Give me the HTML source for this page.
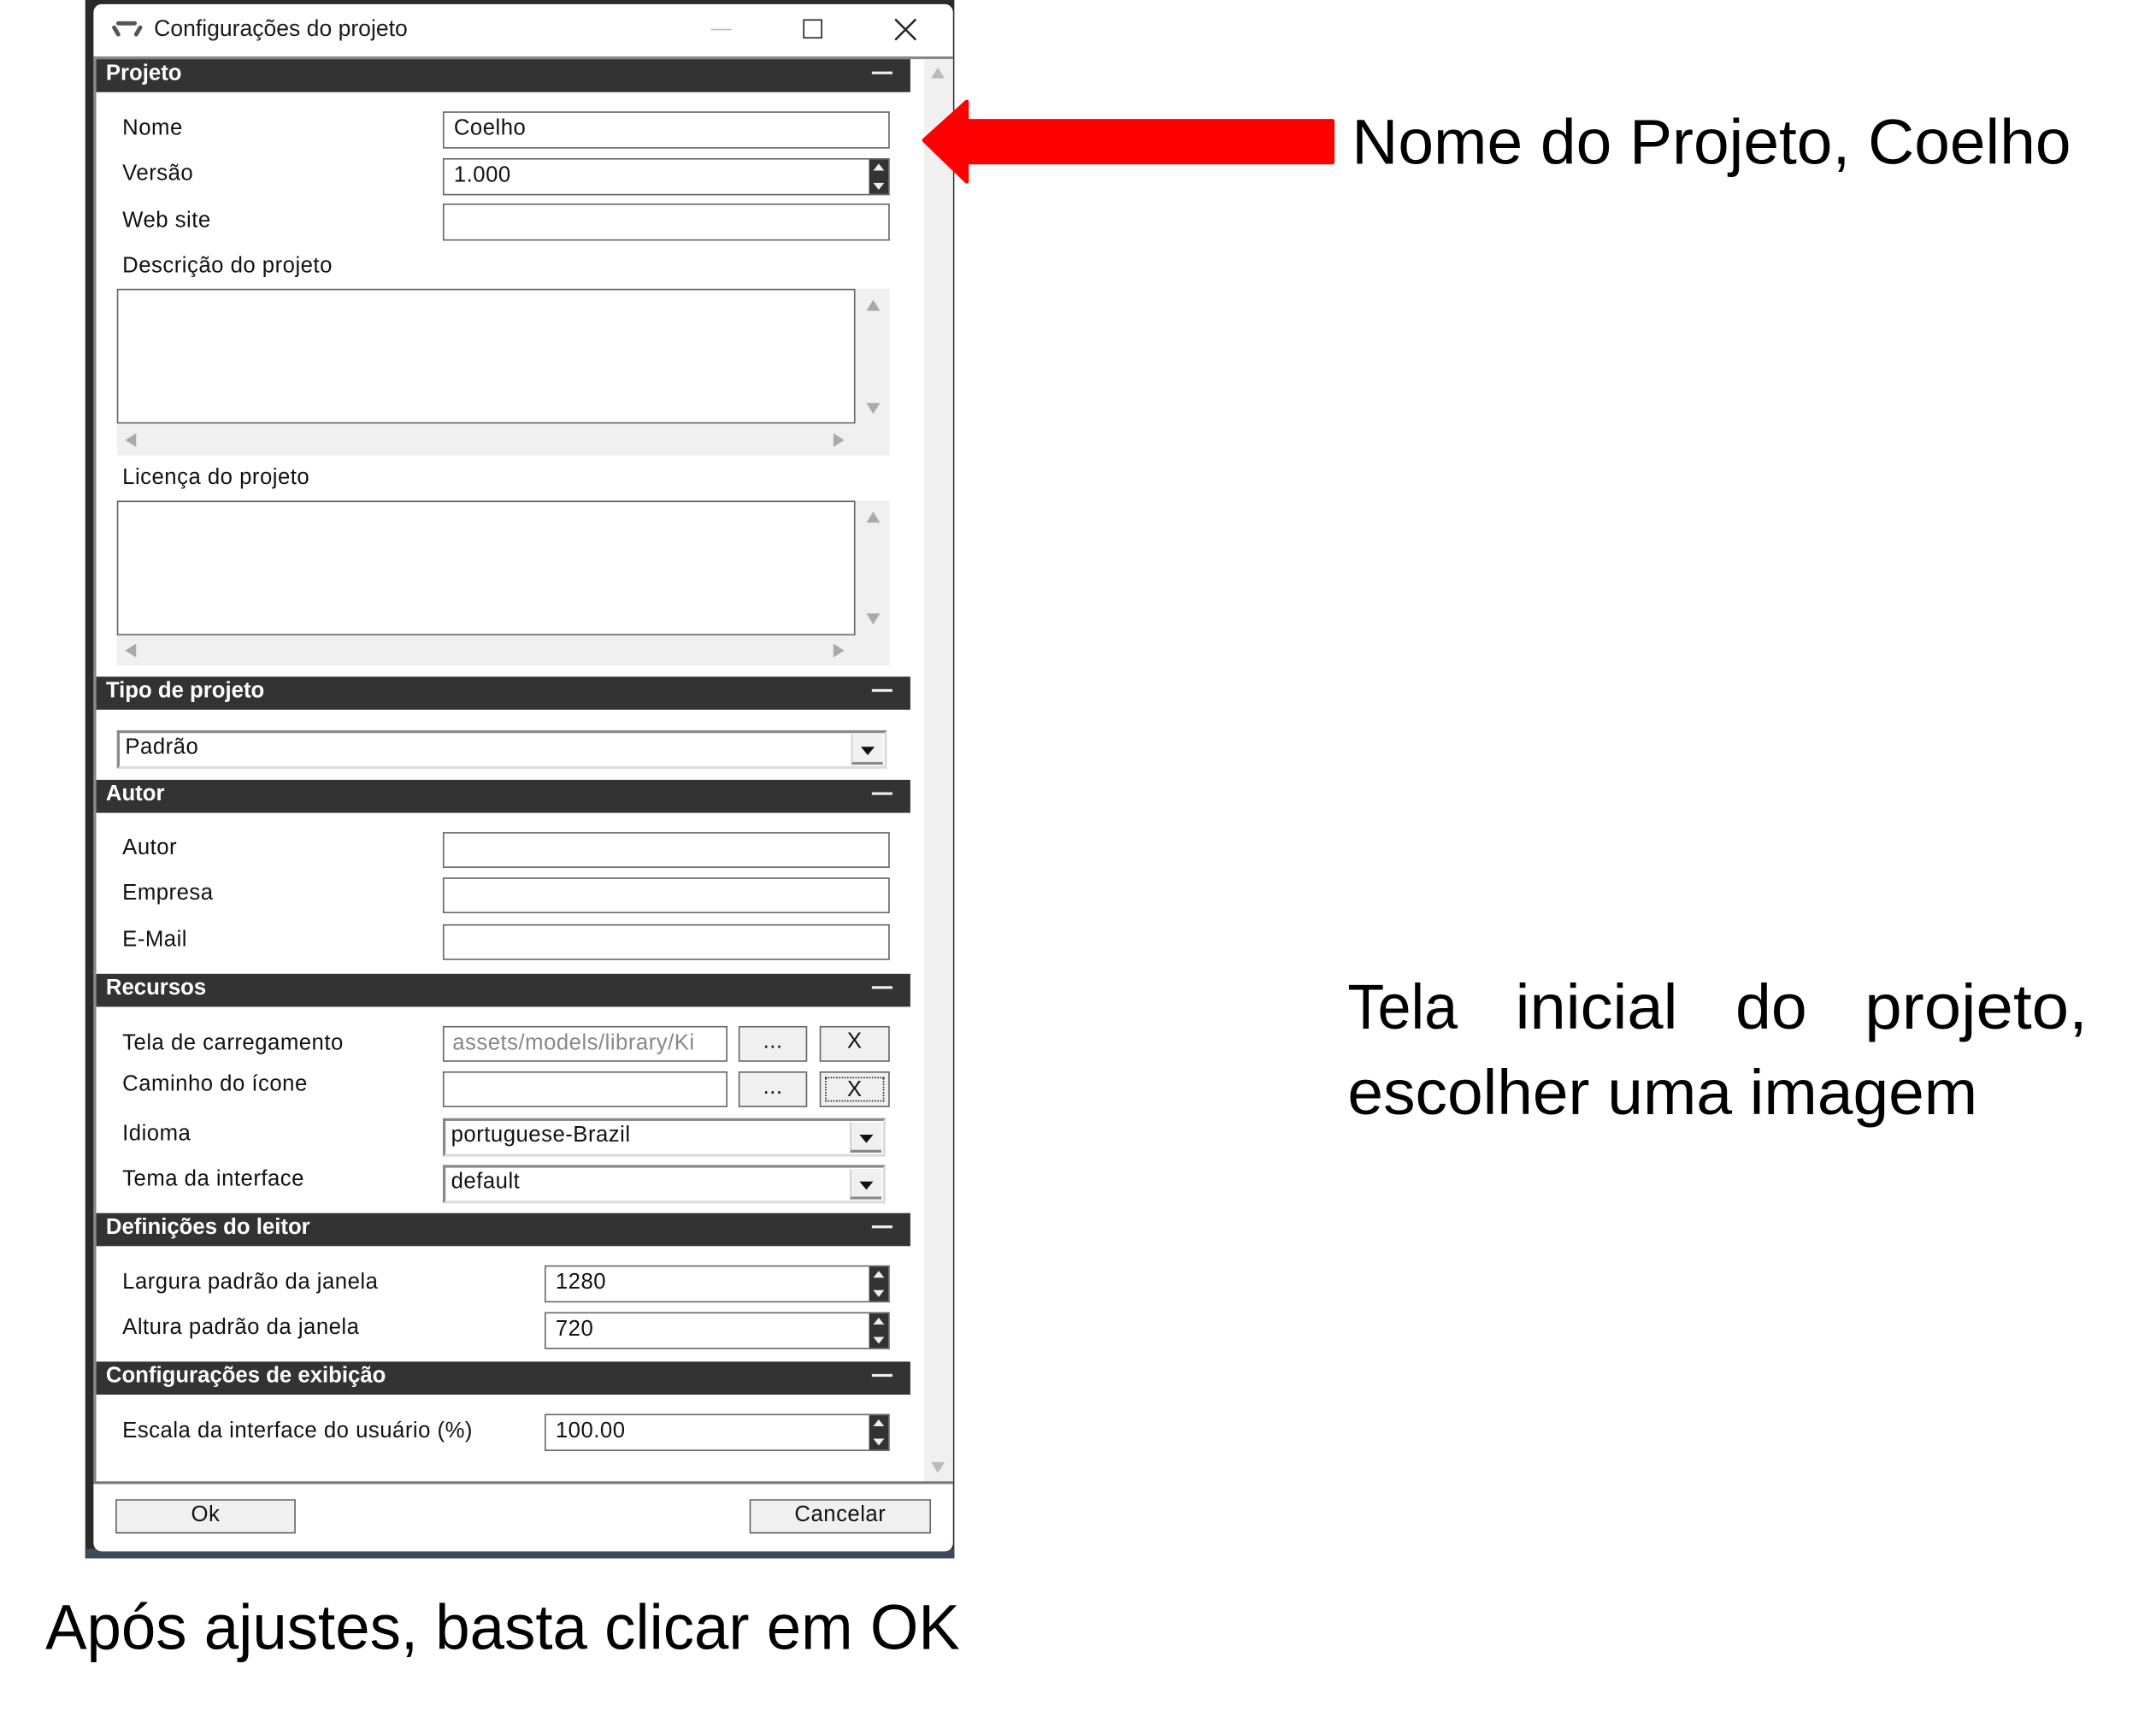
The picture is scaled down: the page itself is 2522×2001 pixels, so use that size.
<!DOCTYPE html>
<html><head><meta charset="utf-8"><style>
html,body{margin:0;padding:0;background:#fff;}
body{width:2522px;height:2001px;overflow:hidden;position:relative;}
#c{position:absolute;left:0;top:0;width:1560px;height:1238px;transform:scale(1.6086,1.6085);transform-origin:0 0;font-family:"Liberation Sans",Arial,sans-serif;}
.a{position:absolute;}
.lbl{position:absolute;left:89px;font-size:16px;color:#111;line-height:20px;letter-spacing:0.3px;}
.inp{position:absolute;background:#fff;border:1px solid #666;box-sizing:border-box;font-size:16px;line-height:24px;padding-left:7px;color:#111;letter-spacing:0.3px;}
.hdr{position:absolute;left:70px;width:592px;height:24px;background:#333;color:#fff;font-weight:bold;font-size:16px;line-height:22px;padding-left:7px;box-sizing:border-box;}
.hdr:after{content:"";position:absolute;right:13px;top:9px;width:15px;height:2px;background:#eee;}
.spin{position:absolute;right:0;top:0;width:14px;height:100%;background:#333;}
.spin:before{content:"";position:absolute;left:3px;top:3px;border:4px solid transparent;border-bottom:5px solid #eee;border-top:0;}
.spin:after{content:"";position:absolute;left:3px;bottom:3px;border:4px solid transparent;border-top:5px solid #eee;border-bottom:0;}
.sel{position:absolute;background:#fff;border:2px solid #888;border-right-color:#ddd;border-bottom-color:#ddd;box-sizing:border-box;font-size:16px;line-height:22px;padding-left:4px;color:#111;letter-spacing:0.3px;}
.sel i{position:absolute;right:1px;top:1px;width:22px;bottom:1px;background:#f0f0f0;border-left:1px solid #ccc;border-bottom:2px solid #888;}
.sel i:after{content:"";position:absolute;left:6px;top:9px;border:5px solid transparent;border-top:6px solid #111;border-bottom:0;}
.btn{position:absolute;background:#f0f0f0;border:1px solid #666;box-sizing:border-box;text-align:center;font-size:16px;line-height:22px;color:#111;letter-spacing:0.3px;}
.ta{position:absolute;background:#f0f0f0;}
.ta .w{position:absolute;left:0;top:0;background:#fff;border:1px solid #666;box-sizing:border-box;}
.tri{position:absolute;width:0;height:0;border:5px solid transparent;}
</style></head><body><div id="c">
<div class="a" style="left:62px;top:0;width:632px;height:1133px;background:#2a2a2a;"></div>
<div class="a" style="left:62px;top:1126px;width:632px;height:7px;background:#3a4a5a;"></div>
<div class="a" style="left:68px;top:3px;width:625px;height:1125px;background:#fff;border-radius:6px;"></div>
<svg class="a" style="left:80px;top:13px" width="26" height="16" viewBox="0 0 26 16"><path d="M6 4 L18 4 M3 7 L6 12 M22 7 L19 12" stroke="#555" stroke-width="3" fill="none" stroke-linecap="round"/></svg>
<div class="a" style="left:112px;top:12px;font-size:16.5px;color:#1a1a1a;">Configurações do projeto</div>
<div class="a" style="left:517px;top:21px;width:15px;height:1px;background:#bbb;"></div>
<div class="a" style="left:584px;top:14px;width:14px;height:14px;border:1.5px solid #222;box-sizing:border-box;"></div>
<svg class="a" style="left:650px;top:13px" width="17" height="17"><path d="M1 1 L16 16 M16 1 L1 16" stroke="#222" stroke-width="1.5"/></svg>
<div class="a" style="left:68px;top:41px;width:625px;height:2px;background:#888;"></div>
<div class="a" style="left:672px;top:43px;width:21px;height:1034px;background:#f0f0f0;"></div>
<div class="tri" style="left:677px;top:49px;border-bottom:8px solid #bbb;border-top:0;"></div>
<div class="tri" style="left:677px;top:1063px;border-top:8px solid #bbb;border-bottom:0;"></div>
<div class="a" style="left:68px;top:43px;width:2px;height:1034px;background:#888;"></div>

<div class="hdr" style="top:43px;">Projeto</div>
<div class="lbl" style="top:84px;">Nome</div>
<div class="inp" style="left:322px;top:81px;width:325px;height:27px;">Coelho</div>
<div class="lbl" style="top:117px;">Versão</div>
<div class="inp" style="left:322px;top:115px;width:325px;height:27px;">1.000<div class="spin"></div></div>
<div class="lbl" style="top:151px;">Web site</div>
<div class="inp" style="left:322px;top:148px;width:325px;height:27px;"></div>
<div class="lbl" style="top:184px;">Descrição do projeto</div>
<div class="ta" style="left:85px;top:210px;width:562px;height:121px;"><div class="w" style="width:537px;height:98px;"></div>
<div class="tri" style="left:545px;top:8px;border-bottom:8px solid #aaa;border-top:0;"></div>
<div class="tri" style="left:545px;top:83px;border-top:8px solid #aaa;border-bottom:0;"></div>
<div class="tri" style="left:6px;top:105px;border-right:8px solid #aaa;border-left:0;"></div>
<div class="tri" style="left:521px;top:105px;border-left:8px solid #aaa;border-right:0;"></div></div>
<div class="lbl" style="top:338px;">Licença do projeto</div>
<div class="ta" style="left:85px;top:364px;width:562px;height:120px;"><div class="w" style="width:537px;height:98px;"></div>
<div class="tri" style="left:545px;top:8px;border-bottom:8px solid #aaa;border-top:0;"></div>
<div class="tri" style="left:545px;top:82px;border-top:8px solid #aaa;border-bottom:0;"></div>
<div class="tri" style="left:6px;top:104px;border-right:8px solid #aaa;border-left:0;"></div>
<div class="tri" style="left:521px;top:104px;border-left:8px solid #aaa;border-right:0;"></div></div>

<div class="hdr" style="top:492px;">Tipo de projeto</div>
<div class="sel" style="left:85px;top:531px;width:560px;height:28px;">Padrão<i></i></div>

<div class="hdr" style="top:567px;">Autor</div>
<div class="lbl" style="top:607px;">Autor</div>
<div class="inp" style="left:322px;top:605px;width:325px;height:26px;"></div>
<div class="lbl" style="top:640px;">Empresa</div>
<div class="inp" style="left:322px;top:638px;width:325px;height:26px;"></div>
<div class="lbl" style="top:674px;">E-Mail</div>
<div class="inp" style="left:322px;top:672px;width:325px;height:26px;"></div>

<div class="hdr" style="top:708px;">Recursos</div>
<div class="lbl" style="top:749px;">Tela de carregamento</div>
<div class="inp" style="left:322px;top:746px;width:207px;height:26px;color:#888;overflow:hidden;white-space:nowrap;padding-left:6px;">assets/models/library/Ki</div>
<div class="btn" style="left:537px;top:746px;width:50px;height:26px;">...</div>
<div class="btn" style="left:596px;top:746px;width:51px;height:26px;">X</div>
<div class="lbl" style="top:779px;">Caminho do ícone</div>
<div class="inp" style="left:322px;top:779px;width:207px;height:26px;"></div>
<div class="btn" style="left:537px;top:779px;width:50px;height:26px;">...</div>
<div class="btn" style="left:596px;top:779px;width:51px;height:26px;"><div style="position:absolute;left:3px;top:3px;right:3px;bottom:3px;border:1px dotted #222;line-height:17px;">X</div></div>
<div class="lbl" style="top:815px;">Idioma</div>
<div class="sel" style="left:322px;top:813px;width:322px;height:28px;">portuguese-Brazil<i></i></div>
<div class="lbl" style="top:848px;">Tema da interface</div>
<div class="sel" style="left:322px;top:847px;width:322px;height:28px;">default<i></i></div>

<div class="hdr" style="top:882px;">Definições do leitor</div>
<div class="lbl" style="top:923px;">Largura padrão da janela</div>
<div class="inp" style="left:396px;top:920px;width:251px;height:27px;">1280<div class="spin"></div></div>
<div class="lbl" style="top:956px;">Altura padrão da janela</div>
<div class="inp" style="left:396px;top:954px;width:251px;height:27px;">720<div class="spin"></div></div>

<div class="hdr" style="top:990px;">Configurações de exibição</div>
<div class="lbl" style="top:1031px;">Escala da interface do usuário (%)</div>
<div class="inp" style="left:396px;top:1028px;width:251px;height:27px;">100.00<div class="spin"></div></div>

<div class="a" style="left:68px;top:1077px;width:625px;height:2px;background:#777;"></div>
<div class="btn" style="left:84px;top:1090px;width:131px;height:25px;">Ok</div>
<div class="btn" style="left:545px;top:1090px;width:132px;height:25px;">Cancelar</div>

<svg class="a" style="left:660px;top:60px" width="320" height="90"><path d="M12 42 L43 14 L43 28 L309 28 L309 58 L43 58 L43 72 Z" fill="#ff0000" stroke="#ff0000" stroke-width="3" stroke-linejoin="round"/></svg>

<svg class="a" style="left:0;top:0" width="1560" height="1238">
<g font-family="'Liberation Sans',Arial,sans-serif" fill="#000" font-size="46">
<text x="983" y="119" textLength="523" lengthAdjust="spacingAndGlyphs">Nome do Projeto, Coelho</text>
<text x="980" y="748" textLength="80" lengthAdjust="spacingAndGlyphs">Tela</text>
<text x="1102" y="748" textLength="118" lengthAdjust="spacingAndGlyphs">inicial</text>
<text x="1262" y="748" textLength="52" lengthAdjust="spacingAndGlyphs">do</text>
<text x="1356" y="748" textLength="162" lengthAdjust="spacingAndGlyphs">projeto,</text>
<text x="980" y="810" textLength="458" lengthAdjust="spacingAndGlyphs">escolher uma imagem</text>
<text x="33" y="1199" textLength="665" lengthAdjust="spacingAndGlyphs">Após ajustes, basta clicar em OK</text>
</g></svg>
</div></body></html>
